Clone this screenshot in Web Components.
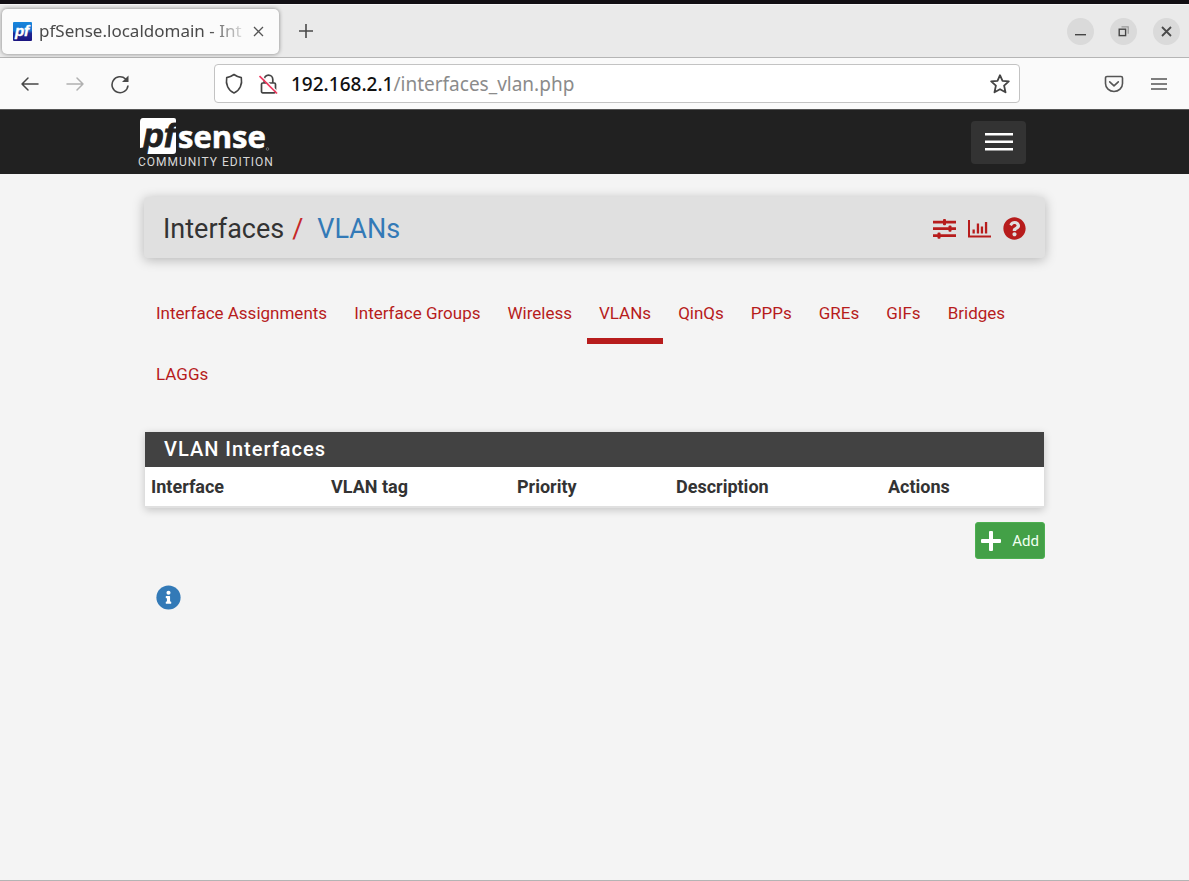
<!DOCTYPE html>
<html lang="en">
<head>
<meta charset="utf-8">
<title>pfSense.localdomain - Interfaces: VLANs</title>
<style>
  html, body { margin: 0; padding: 0; background: #f4f4f4; }
</style>
</head>
<body>
<app-window></app-window>

<template id="t-window">
  <style>
    :host { display: flex; flex-direction: column; min-height: 100vh; box-sizing: border-box;
      border-top: 4px solid #120f14; border-bottom: 1px solid #b4b4b4;
      font-family: Roboto, "Liberation Sans", sans-serif; color: #424242; background: #f4f4f4; }
    main { width: 901px; max-width: calc(100% - 32px); margin: 0 auto; flex: 1; }
    .add { display: flex; justify-content: flex-end; padding-top: 14px; }
    .info { padding: 26px 12px; }
  </style>
  <browser-tabs></browser-tabs>
  <browser-toolbar></browser-toolbar>
  <pf-navbar></pf-navbar>
  <main>
    <pf-header><span slot="section">Interfaces</span><a slot="page" href="#vlans">VLANs</a></pf-header>
    <pf-tabs></pf-tabs>
    <pf-panel>VLAN Interfaces</pf-panel>
    <div class="add"><pf-add-button>Add</pf-add-button></div>
    <div class="info"><pf-info></pf-info></div>
  </main>
</template>

<template id="t-browser-tabs">
  <style>
    :host { display: flex; align-items: center; height: 54px; box-sizing: border-box; padding: 0 9px 0 2px;
      background: #eaeaea; border-bottom: 1px solid #b5b5b5; border-top: 1px solid #f6f6f6;
      font-family: "Noto Sans", "Open Sans", sans-serif; color: #4a4a4a; }
    .tab { display: flex; align-items: center; width: 277px; height: 45px; box-sizing: border-box; padding: 0 15px 0 11px;
      background: #fbfbfb; border-radius: 5px; box-shadow: 0 0 4px rgba(0,0,0,.45); }
    .title { flex: 1; margin-left: 7px; font-size: 17px; line-height: 24px; white-space: nowrap;
      -webkit-mask-image: linear-gradient(to right, #000 170px, transparent 210px);
      mask-image: linear-gradient(to right, #000 170px, transparent 210px); }
    button { border: 0; padding: 0; background: none; color: #4a4a4a; display: grid; place-items: center; }
    .new { width: 28px; height: 28px; margin-left: 13px; }
    .controls { margin-left: auto; display: flex; gap: 16px; }
    .controls button { width: 27px; height: 27px; border-radius: 50%; background: #dadada; }
    svg { display: block; }
  </style>
  <div class="tab">
    <svg width="19" height="19" viewBox="0 0 19 19">
      <defs><linearGradient id="g" x1="0" y1="0" x2="0" y2="1"><stop offset="0" stop-color="#1686dc"/><stop offset=".45" stop-color="#1873cf"/><stop offset=".6" stop-color="#1d2593"/><stop offset="1" stop-color="#1b1580"/></linearGradient></defs>
      <rect width="19" height="19" rx="1" fill="url(#g)"/>
      <text x="9" y="14" text-anchor="middle" fill="#fff" stroke="#fff" stroke-width=".4" font-family="Liberation Sans, sans-serif" font-weight="700" font-style="italic" font-size="15">pf</text>
    </svg>
    <span class="title">pfSense.localdomain - Int</span>
    <button aria-label="Close tab"><svg width="11" height="11" viewBox="0 0 11 11" stroke="#555" stroke-width="1.3" fill="none"><path d="M1 1l9 9M10 1l-9 9"/></svg></button>
  </div>
  <button class="new" aria-label="New tab"><svg width="16" height="16" viewBox="0 0 16 16" stroke="#4a4a4a" stroke-width="1.6" fill="none"><path d="M8 1v14M1 8h14"/></svg></button>
  <div class="controls">
    <button aria-label="Minimize"><svg width="11" height="11" viewBox="0 0 11 11"><path d="M0 8h11v1.4H0z" fill="#444"/></svg></button>
    <button aria-label="Restore"><svg width="11" height="11" viewBox="0 0 11 11" fill="none"><path d="M3.5.8h6.7v7" stroke="#999" stroke-width="1.2"/><rect x="1.2" y="3.2" width="6.4" height="6.4" stroke="#444" stroke-width="1.4"/></svg></button>
    <button aria-label="Close window"><svg width="11" height="11" viewBox="0 0 11 11" stroke="#4a4a4a" stroke-width="1.8" fill="none"><path d="M1 1l9 9M10 1l-9 9"/></svg></button>
  </div>
</template>

<template id="t-browser-toolbar">
  <style>
    :host { display: flex; align-items: center; height: 52px; box-sizing: border-box; padding: 0 20px; background: #fafafa;
      border-bottom: 1px solid #555; font-family: "Noto Sans", "Open Sans", sans-serif; }
    button { border: 0; padding: 0; background: none; display: grid; place-items: center; width: 20px; height: 20px; }
    svg { display: block; }
    .nav { display: flex; gap: 25px; flex: 1 0 194px; max-width: 194px; }
    form { flex: 1 1 806px; display: flex; align-items: center; height: 39px; box-sizing: border-box; margin: 0;
      padding: 0 9px; background: #fff; border: 1px solid #c3c3c3; border-radius: 4px; }
    .lock { margin: 0 13px 0 15px; }
    label, input { font-size: 19px; line-height: 26px; }
    label { color: #111; font-weight: 500; }
    input { flex: 1; min-width: 0; font-family: inherit; border: 0; outline: 0; padding: 0; margin: 0; background: none; color: #8b8b8b; }
    .menu { display: flex; gap: 25px; margin-left: 84px; }
  </style>
  <div class="nav">
    <button aria-label="Back"><svg width="20" height="16" viewBox="0 0 20 16" fill="none" stroke="#474747" stroke-width="1.5" stroke-linecap="round" stroke-linejoin="round"><path d="M18 8H2M8 2L2 8l6 6"/></svg></button>
    <button aria-label="Forward"><svg width="20" height="16" viewBox="0 0 20 16" fill="none" stroke="#b0b0b0" stroke-width="1.5" stroke-linecap="round" stroke-linejoin="round"><path d="M2 8h16M12 2l6 6-6 6"/></svg></button>
    <button aria-label="Reload"><svg width="20" height="20" viewBox="0 0 20 20" fill="none" stroke="#474747" stroke-width="1.6"><path d="M15.600 5A8 8 0 1 0 18 11.500"/><path d="M18.500 1.500v6.500h-6.500z" fill="#474747" stroke="none"/></svg></button>
  </div>
  <form>
    <svg width="20" height="22" viewBox="0 0 20 22" fill="none" stroke="#444" stroke-width="1.6" stroke-linejoin="round"><path d="M10 1.500Q13.500 4 17.300 4.600C18.500 11 16 17.500 10 20C4 17.500 1.500 11 2.700 4.600Q6.500 4 10 1.500z"/></svg>
    <svg class="lock" width="19" height="22" viewBox="0 0 19 22" fill="none" stroke="#444" stroke-width="1.700"><rect x="2.500" y="10" width="14" height="9.800" rx="1.200"/><path d="M5.200 10V6.500a4.300 4.300 0 0 1 8.600 0V10"/><path d="M1.500 2L19 19.500" stroke="#fff" stroke-width="1.500"/><path d="M.5 3L18 20.500" stroke="#f0385f" stroke-width="1.700"/></svg>
    <label for="url">192.168.2.1</label><input id="url" type="text" value="/interfaces_vlan.php">
    <button type="button" aria-label="Bookmark"><svg width="20" height="20" viewBox="0 0 20 20" fill="none" stroke="#444" stroke-width="1.800" stroke-linejoin="round"><path d="M10 1.200l2.500 5.600 6.300.6-4.700 4.200 1.400 6.700L10 15.200l-5.500 3.100 1.400-6.700L1.200 7.400l6.300-.6z"/></svg></button>
  </form>
  <div class="menu">
    <button aria-label="Pocket"><svg width="20" height="18" viewBox="0 0 20 18" fill="none" stroke="#555" stroke-width="1.600" stroke-linecap="round" stroke-linejoin="round"><path d="M3 1.500h14a1.500 1.500 0 0 1 1.500 1.500v5.500a8.500 8 0 0 1-17 0V3A1.500 1.500 0 0 1 3 1.500z"/><path d="M5.700 6.800L10 10.800l4.300-4"/></svg></button>
    <button aria-label="Menu"><svg width="16" height="14" viewBox="0 0 16 14" stroke="#555" stroke-width="1.600"><path d="M0 2h16M0 7h16M0 12h16"/></svg></button>
  </div>
</template>

<template id="t-navbar">
  <style>
    :host { display: block; background: #212121; height: 64px; }
    .bar { display: flex; align-items: center; justify-content: space-between; width: 901px; max-width: calc(100% - 32px);
      box-sizing: border-box; margin: 0 auto; padding-right: 19px; height: 64px; }
    a { display: block; margin-left: -6px; padding-bottom: 4px; color: #fff; text-decoration: none; }
    svg { display: block; }
    small { display: block; font-size: 12px; line-height: 12px; letter-spacing: 1px; color: #d8d8d8; white-space: nowrap; }
    button { width: 55px; height: 43px; border: 0; border-radius: 4px; background: #333; padding: 0; display: grid; place-items: center; }
  </style>
  <div class="bar">
    <a href="#home" aria-label="pfSense community edition">
      <svg width="134" height="43" viewBox="0 -5 134 43">
        <path d="M5 0H36Q38 0 38 2V33Q38 36 35 36H6L8 29 2 30V4Q2 0 5 0z" fill="#fff"/>
        <text x="5" y="29" font-family="Liberation Sans, sans-serif" font-weight="700" font-style="italic" font-size="34" fill="#212121" stroke="#212121" stroke-width=".8">pf</text>
        <text x="40" y="30" font-family="Open Sans, sans-serif" font-weight="700" font-size="31" fill="#fff" stroke="#fff" stroke-width=".6">sense</text>
        <circle cx="129.500" cy="31" r="1.300" fill="none" stroke="#999" stroke-width=".6"/>
      </svg>
      <small>COMMUNITY EDITION</small>
    </a>
    <button aria-label="Toggle navigation"><svg width="28" height="18" viewBox="0 0 28 18" fill="#fff"><path d="M0 0h28v2.500H0zM0 7.500h28V10H0zM0 15h28v2.500H0z"/></svg></button>
  </div>
</template>

<template id="t-header">
  <style>
    :host { display: flex; align-items: center; justify-content: space-between; height: 61px; box-sizing: border-box;
      margin-top: 23px; padding: 2px 19px 0; background: #e0e0e0; border-radius: 4px; box-shadow: 0 2px 12px rgba(0,0,0,.26); }
    h1 { margin: 0; display: flex; font-size: 27px; line-height: 32px; font-weight: 400; color: #333; }
    i { font-style: normal; color: #c62828; margin: 0 14px 0 8px; }
    ::slotted(a) { color: #337ab7; text-decoration: none; }
    nav { display: flex; align-items: center; gap: 12px; }
    nav a { display: block; }
    svg { display: block; }
  </style>
  <h1><slot name="section"></slot><i>/</i><slot name="page"></slot></h1>
  <nav>
    <a href="#settings" aria-label="Settings"><svg width="23" height="20" viewBox="0 0 23 20" fill="#b71c1c"><path d="M0 1.700h23v2.800H0zM0 8.300h23v2.800H0zM0 15.300h23v2.800H0z"/><rect x="10" y="0" width="3" height="6.200" rx="1"/><rect x="15.500" y="6.600" width="3" height="6.200" rx="1"/><rect x="4.500" y="13.600" width="3" height="6.200" rx="1"/></svg></a>
    <a href="#status" aria-label="Status"><svg width="23" height="18" viewBox="0 0 23 18" fill="#b71c1c"><path d="M0 0h2v15.500h21V17.500H0zM4.500 9.500h2.300v4H4.500zM8.800 3.500h2.300v10H8.800zM12.800 6.500h2.300v7h-2.300zM16.900 2h2.300v11.500h-2.300z"/></svg></a>
    <a href="#help" aria-label="Help"><svg width="23" height="23" viewBox="0 0 512 512" fill="#b71c1c"><path d="M504 256c0 137-111 248-248 248S8 393 8 256C8 119 119 8 256 8s248 111 248 248zM262.700 90c-54.500 0-89.300 23-116.500 63.800-3.500 5.300-2.400 12.400 2.700 16.300l34.700 26.300c5.200 3.900 12.600 3 16.700-2.100 17.900-22.700 30.100-35.800 57.300-35.800 20.400 0 45.700 13.100 45.700 33 0 15-12.400 22.700-32.500 34C247.100 238.500 216 254.900 216 296v4c0 6.600 5.400 12 12 12h56c6.600 0 12-5.400 12-12v-1.300c0-28.500 83.200-29.600 83.200-106.700 0-58-60.200-102-116.500-102zM256 338c-25.400 0-46 20.600-46 46s20.600 46 46 46 46-20.600 46-46-20.600-46-46-46z"/></svg></a>
  </nav>
</template>

<template id="t-tabs">
  <style>
    :host { display: block; margin-top: 24px; }
    ul { list-style: none; margin: 0; padding: 0; display: flex; flex-wrap: wrap; column-gap: 3px; }
    a { display: block; height: 61px; box-sizing: border-box; padding: 21px 12px 0; font-size: 17px; line-height: 21px;
      color: #b71c1c; text-decoration: none; }
    a[aria-current] { height: 62px; margin-bottom: -1px; border-bottom: 6px solid #b71c1c; }
  </style>
  <nav><ul>
    <li><a href="#assign">Interface Assignments</a></li><li><a href="#groups">Interface Groups</a></li><li><a href="#wireless">Wireless</a></li><li><a href="#vlans" aria-current="page">VLANs</a></li><li><a href="#qinqs">QinQs</a></li><li><a href="#ppps">PPPs</a></li><li><a href="#gres">GREs</a></li><li><a href="#gifs">GIFs</a></li><li><a href="#bridges">Bridges</a></li><li><a href="#laggs">LAGGs</a></li>
  </ul></nav>
</template>

<template id="t-panel">
  <style>
    :host { display: block; margin: 28px 1px 0; background: #fff; box-shadow: 0 2px 8px rgba(0,0,0,.2); border-bottom: 2px solid #e0e0e0; }
    h2 { margin: 0; padding: 0 19px; background: #424242; color: #fff; font-size: 20px; line-height: 35px; font-weight: 500; letter-spacing: 1px; }
    table { width: 100%; border-collapse: collapse; }
    th { padding: 0 6px; height: 39px; text-align: left; font-size: 18px; line-height: 21px; font-weight: 700; color: #333; }
    .c1 { width: 180px } .c2 { width: 186px } .c3 { width: 159px } .c4 { width: 212px } .c5 { width: 162px }
  </style>
  <h2><slot></slot></h2>
  <table>
    <colgroup><col class="c1"><col class="c2"><col class="c3"><col class="c4"><col class="c5"></colgroup>
    <thead><tr><th>Interface</th><th>VLAN tag</th><th>Priority</th><th>Description</th><th>Actions</th></tr></thead>
  </table>
</template>

<template id="t-add">
  <style>
    :host { display: block; }
    button { display: flex; align-items: center; gap: 11px; height: 37px; box-sizing: border-box; padding: 0 5px; border: 1px solid #4caf50;
      border-radius: 3px; background: #43a047; color: #f0fff0; font-family: inherit; font-size: 15px; line-height: 20px; }
  </style>
  <button><svg width="20" height="20" viewBox="0 0 20 20" fill="#fff"><path d="M8 1q0-1 1-1h2q1 0 1 1v7h7q1 0 1 1v2q0 1-1 1h-7v7q0 1-1 1H9q-1 0-1-1v-7H1q-1 0-1-1V9q0-1 1-1h7z"/></svg><slot></slot></button>
</template>

<template id="t-info">
  <style>
    :host { display: block; }
    button { display: block; border: 0; padding: 0; background: none; }
    svg { display: block; }
  </style>
  <button aria-label="Information"><svg width="25" height="25" viewBox="0 0 512 512"><circle cx="256" cy="256" r="248" fill="#337ab7"/><path fill="#fff" d="M256 118a42 42 0 1 1 0 84 42 42 0 0 1 0-84zm56 254c0 7-5 12-12 12h-88c-7 0-12-5-12-12v-24c0-7 5-12 12-12h12v-64h-12c-7 0-12-5-12-12v-24c0-7 5-12 12-12h64c7 0 12 5 12 12v100h12c7 0 12 5 12 12z"/></svg></button>
</template>

<script>
  const register = (name, id) => customElements.define(name, class extends HTMLElement {
    constructor() {
      super();
      this.attachShadow({ mode: 'open' }).append(document.getElementById(id).content.cloneNode(true));
    }
  });
  register('browser-tabs', 't-browser-tabs');
  register('browser-toolbar', 't-browser-toolbar');
  register('pf-navbar', 't-navbar');
  register('pf-header', 't-header');
  register('pf-tabs', 't-tabs');
  register('pf-panel', 't-panel');
  register('pf-add-button', 't-add');
  register('pf-info', 't-info');
  register('app-window', 't-window');
</script>
</body>
</html>
